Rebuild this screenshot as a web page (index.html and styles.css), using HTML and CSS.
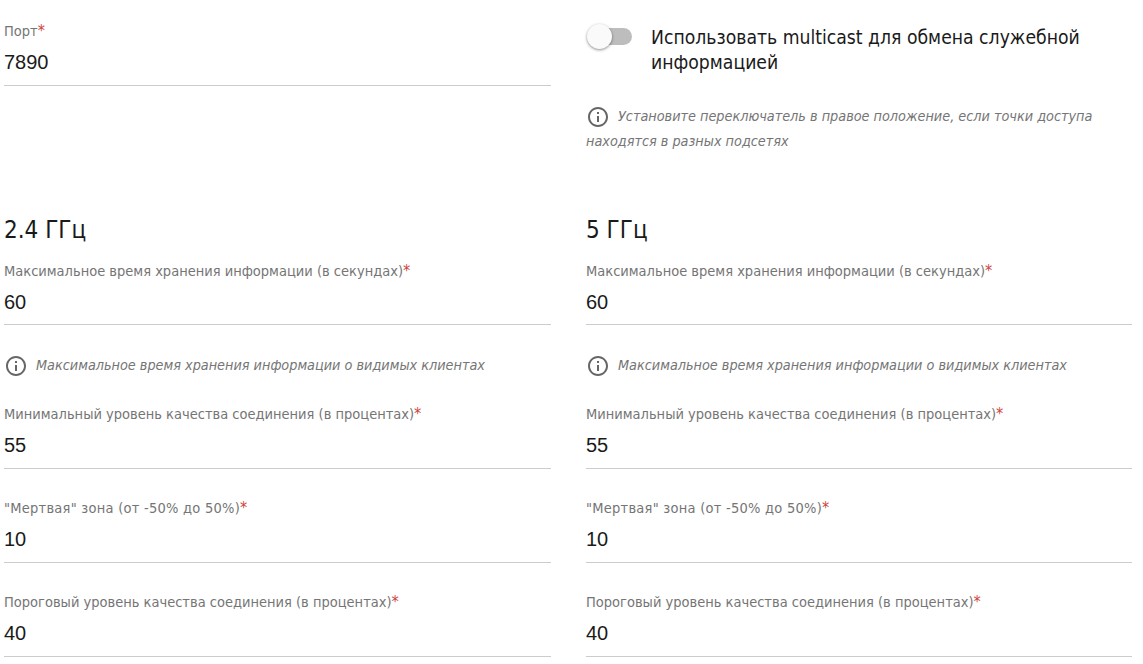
FILE: index.html
```html
<!DOCTYPE html>
<html lang="ru">
<head>
<meta charset="utf-8">
<title>Настройки</title>
<link rel="stylesheet" href="styles.css">
</head>
<body>
<main class="page">
  <section class="top-row">
    <div class="col col-port">
      <div class="field">
        <div class="label">Порт<span class="req">*</span></div>
        <div class="value">7890</div>
      </div>
    </div>
    <div class="col">
      <div class="switch-row">
        <span class="switch"><span class="track"></span><span class="thumb"></span></span>
        <span class="switch-text">Использовать multicast для обмена служебной информацией</span>
      </div>
      <p class="hint hint-wrap"><svg class="icon" viewBox="0 0 24 24"><path d="M11 7h2v2h-2zm0 4h2v6h-2zm1-9C6.48 2 2 6.48 2 12s4.48 10 10 10 10-4.48 10-10S17.52 2 12 2zm0 18c-4.41 0-8-3.59-8-8s3.59-8 8-8 8 3.59 8 8-3.59 8-8 8z"/></svg>Установите переключатель в правое положение, если точки доступа находятся в разных подсетях</p>
    </div>
  </section>
  <section class="bands">
    <div class="col">
      <h2 class="band-title">2.4 ГГц</h2>
      <div class="field">
        <div class="label">Максимальное время хранения информации (в секундах)<span class="req">*</span></div>
        <div class="value">60</div>
      </div>
      <p class="hint hint-field"><svg class="icon" viewBox="0 0 24 24"><path d="M11 7h2v2h-2zm0 4h2v6h-2zm1-9C6.48 2 2 6.48 2 12s4.48 10 10 10 10-4.48 10-10S17.52 2 12 2zm0 18c-4.41 0-8-3.59-8-8s3.59-8 8-8 8 3.59 8 8-3.59 8-8 8z"/></svg>Максимальное время хранения информации о видимых клиентах</p>
      <div class="field">
        <div class="label">Минимальный уровень качества соединения (в процентах)<span class="req">*</span></div>
        <div class="value">55</div>
      </div>
      <div class="field spaced">
        <div class="label label-wide">"Мертвая" зона (от -50% до 50%)<span class="req">*</span></div>
        <div class="value">10</div>
      </div>
      <div class="field spaced">
        <div class="label">Пороговый уровень качества соединения (в процентах)<span class="req">*</span></div>
        <div class="value">40</div>
      </div>
    </div>
    <div class="col">
      <h2 class="band-title">5 ГГц</h2>
      <div class="field">
        <div class="label">Максимальное время хранения информации (в секундах)<span class="req">*</span></div>
        <div class="value">60</div>
      </div>
      <p class="hint hint-field"><svg class="icon" viewBox="0 0 24 24"><path d="M11 7h2v2h-2zm0 4h2v6h-2zm1-9C6.48 2 2 6.48 2 12s4.48 10 10 10 10-4.48 10-10S17.52 2 12 2zm0 18c-4.41 0-8-3.59-8-8s3.59-8 8-8 8 3.59 8 8-3.59 8-8 8z"/></svg>Максимальное время хранения информации о видимых клиентах</p>
      <div class="field">
        <div class="label">Минимальный уровень качества соединения (в процентах)<span class="req">*</span></div>
        <div class="value">55</div>
      </div>
      <div class="field spaced">
        <div class="label label-wide">"Мертвая" зона (от -50% до 50%)<span class="req">*</span></div>
        <div class="value">10</div>
      </div>
      <div class="field spaced">
        <div class="label">Пороговый уровень качества соединения (в процентах)<span class="req">*</span></div>
        <div class="value">40</div>
      </div>
    </div>
  </section>
</main>
</body>
</html>
```
FILE: styles.css
```css
* { box-sizing: border-box; }
html, body { margin: 0; padding: 0; background: #fff; overflow: hidden; }
body { font-family: "DejaVu Sans Condensed", "DejaVu Sans", sans-serif; font-stretch: condensed; color: #1a1a1a; }
.page { padding: 0 11px 0 4px; height: 664px; overflow: hidden; }
.top-row, .bands { display: grid; grid-template-columns: 547px 546px; column-gap: 35px; }
.top-row { height: 212px; }
.col-port { padding-top: 21px; }
.field { border-bottom: 1px solid #ccc; height: 65px; }
.band-title + .field { height: 64px; }
.field.spaced { margin-top: 29px; }
.label { font-size: 14.5px; line-height: 20px; color: #757575; }
.label-wide { letter-spacing: .25px; }
.req { color: #d0423c; font-size: 16px; font-stretch: normal; line-height: 0; letter-spacing: 0; }
.value { font-family: "Liberation Sans", sans-serif; font-stretch: normal; font-size: 20px; line-height: 30px; margin-top: 6px; color: #1a1a1a; }
.switch-row { display: flex; align-items: flex-start; padding-top: 25px; }
.switch { position: relative; flex: none; width: 46px; height: 24px; margin-right: 19px; }
.track { position: absolute; left: 4px; right: 0; top: 3px; height: 17px; border-radius: 9px; background: #bdbdbd; }
.thumb { position: absolute; left: 1px; top: -1px; width: 25px; height: 25px; border-radius: 50%; background: #fafafa; box-shadow: 0 1px 3px rgba(0,0,0,.45); }
.switch-text { font-size: 19.2px; line-height: 25px; color: #1a1a1a; }
.hint { margin: 0; font-size: 14.3px; line-height: 25px; font-style: italic; color: #757575; }
.hint-wrap { margin-top: 29px; }
.hint-field { margin-top: 28px; margin-bottom: 26px; }
.icon { width: 24px; height: 24px; fill: #666; vertical-align: middle; margin-right: 8px; }
.band-title { margin: 0 0 13px; font-size: 24px; line-height: 36px; font-weight: 400; color: #1a1a1a; }
```
